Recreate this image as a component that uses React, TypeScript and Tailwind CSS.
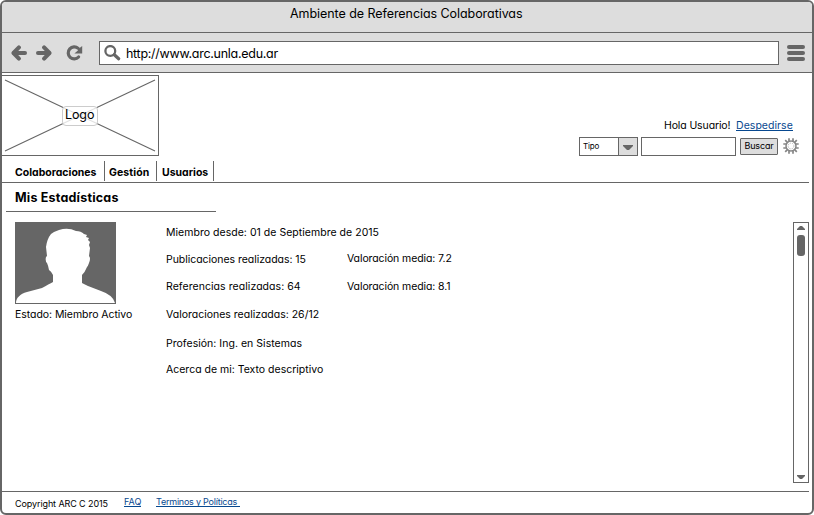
import React from "react";

const line = "#666666";

function BackArrow() {
  return (
    <svg width="16" height="16" viewBox="0 0 16 16" fill="none" stroke={line} strokeWidth="4" strokeLinecap="round" strokeLinejoin="round">
      <path d="M7.9 2.4 2.5 8l5.4 5.6" />
      <path d="M3 8h11" />
    </svg>
  );
}

function Reload() {
  return (
    <svg width="17" height="16" viewBox="0 0 17 16" fill="none">
      <path d="M12.2 3.4A6 6 0 1 0 12.6 12" stroke={line} strokeWidth="3.2" strokeLinecap="round" />
      <path d="M16.2 1v7.4H8.4l3.2-2.6 1.4-2.4z" fill={line} />
    </svg>
  );
}

function Search() {
  return (
    <svg width="17" height="16" viewBox="0 0 17 16" fill="none" stroke={line}>
      <circle cx="6.3" cy="6" r="4.9" strokeWidth="2.3" />
      <path d="m10.3 9.7 4.4 4" strokeWidth="3.2" strokeLinecap="round" />
    </svg>
  );
}

function Gear() {
  return (
    <svg width="16" height="16" viewBox="0 0 16 16" fill="none" stroke="#858585">
      <g strokeWidth="1.7">
        <path d="M6 0.3v3M10 0.3v3M6 12.7v3M10 12.7v3M0.3 6h3M0.3 10h3M12.7 6h3M12.7 10h3" />
        <path d="m2.2 2.2 2.2 2.2M13.8 2.2l-2.2 2.2M2.2 13.8l2.2-2.2M13.8 13.8l-2.2-2.2" />
      </g>
      <circle cx="8" cy="8" r="5" strokeWidth="1.5" />
      <circle cx="8" cy="8" r="2.9" strokeWidth="0.8" stroke="#aaaaaa" strokeDasharray="1.4 1" />
    </svg>
  );
}

function Avatar() {
  return (
    <svg width="101" height="82" viewBox="0 0 101 82">
      <rect width="101" height="82" fill={line} />
      <path
        fill="#fff"
        d="M1 81C1 76 5 72 12 70L27 66Q34 62 38 60V53Q36 49 34 48Q33 43 32 41Q30 39 31 35L32 34L31 25Q32 17 36 12L39 10L44 8Q53 5 61 9Q66 9 69 12L72 13L71 15L74 16L73 18L75 20L74 23L75 26L74 34Q76 36 74 41Q73 44 72 45Q70 50 67 53V61L73 64L86 69Q98 73 100 81Z"
      />
    </svg>
  );
}

function Triangle({ up = false }: { up?: boolean }) {
  return (
    <svg width="8" height="4" viewBox="0 0 8 4">
      <path d={up ? "M0 4V3L3 0h2l3 3v1z" : "M0 0h8v1L5 4H3L0 1z"} fill={line} />
    </svg>
  );
}

const link = "text-[#07488f] border-b border-[#07488f]";

export default function App() {
  return (
    <div className="flex h-[515px] w-[814px] flex-col overflow-hidden rounded-[6px] border-2 border-[#666666] bg-white font-['Inter','Liberation_Sans',sans-serif] text-[10.5px] leading-[18px] whitespace-nowrap text-black [font-feature-settings:'cv11']">
      <header className="shrink-0 bg-[#dddddd]">
        <div className="h-[31px] border-b border-[#666666] pt-[2px] pl-[288px] text-[12.5px] leading-5 tracking-[-0.06px]">
          Ambiente de Referencias Colaborativas
        </div>
        <div className="flex h-10 items-center border-b border-[#666666] pl-[9px]">
          <BackArrow />
          <span className="ml-[9px] rotate-180"><BackArrow /></span>
          <span className="ml-[14px]"><Reload /></span>
          <div className="ml-4 flex h-6 w-[680px] items-center border border-[#666666] bg-white pl-1">
            <Search />
            <span className="ml-[5px] pt-[2px] text-[12.5px] leading-5 tracking-[-0.28px]">http://www.arc.unla.edu.ar</span>
          </div>
          <div className="ml-2 flex flex-col gap-[2px] pt-px">
            <i className="h-1 w-[18px] rounded-[2px] bg-[#666666]" />
            <i className="h-1 w-[18px] rounded-[2px] bg-[#666666]" />
            <i className="h-1 w-[18px] rounded-[2px] bg-[#666666]" />
          </div>
        </div>
      </header>

      <div className="flex h-[85px] shrink-0 pt-[2px]">
        <div className="-ml-px grid h-[81px] w-[158px] place-items-center border border-[#666666]">
          <svg className="col-start-1 row-start-1" width="156" height="79" viewBox="0 0 156 79" stroke={line} strokeWidth="1.1">
            <path d="m3 4 150 71M3 75 153 4" />
          </svg>
          <span className="col-start-1 row-start-1 h-5 w-[36px] rounded-[4px] border border-[#cccccc] bg-white/80 pl-[2px] text-[12.5px] leading-[16px] tracking-[-0.1px]">Logo</span>
        </div>
        <div className="mr-[19px] ml-auto pt-[42px]">
          <div className="flex h-5 items-start justify-end">
            <span className="w-[72px] tracking-[-0.12px]">Hola Usuario!</span>
            <span className={`h-[14px] w-[57px] tracking-[0.05px] ${link}`}>Despedirse</span>
          </div>
          <div className="flex items-center">
            <div className="flex h-[19px] w-[59px] border border-[#666666] text-[8px] leading-[17px] tracking-[-0.2px]">
              <span className="w-[39px] border-r border-[#666666] pl-[3px]">Tipo</span>
              <span className="flex flex-1 items-center justify-center bg-[#dddddd] pt-[2px]">
                <svg width="10" height="5" viewBox="0 0 10 5"><path d="M0 0h10v1L6 5H4L0 1z" fill={line} /></svg>
              </span>
            </div>
            <div className="ml-[3px] h-[19px] w-[95px] border border-[#666666]" />
            <div className="ml-1 h-[17px] w-[38px] rounded-[1px] border border-[#666666] bg-[#dddddd] text-center text-[9px] leading-[14px] tracking-[-0.15px]">Buscar</div>
            <span className="-mt-px -mr-[6px] mb-px ml-[5px]"><Gear /></span>
          </div>
        </div>
      </div>

      <nav className="mr-[3px] flex h-[25px] shrink-0 border-b border-[#666666] pt-[3px] pl-[13px] font-bold">
        <span className="h-5 w-[90px] border-r border-[#666666] pt-[3px]">Colaboraciones</span>
        <span className="h-5 w-[52px] border-r border-[#666666] pt-[3px] pl-[4px] tracking-[0.1px]">Gestión</span>
        <span className="h-5 w-[57px] border-r border-[#666666] pt-[3px] pl-[5px]">Usuarios</span>
      </nav>
      <h1 className="ml-1 h-[29px] w-[210px] shrink-0 border-b border-[#666666] pt-[5px] pl-[9px] text-[12.5px] leading-5 font-bold tracking-[0.2px]">
        Mis Estadísticas
      </h1>

      <main className="flex h-[279px] shrink-0 pt-[10px] pr-[3px] pl-[13px]">
        <div className="w-[151px]">
          <Avatar />
          <p className="pt-[2px] tracking-[-0.05px]">Estado: Miembro Activo</p>
        </div>
        <div className="w-[181px] pt-[2px]">
          <p className="h-[27px] tracking-[0.03px]">Miembro desde: 01 de Septiembre de 2015</p>
          <p className="h-[27px] tracking-[-0.04px]">Publicaciones realizadas: 15</p>
          <p className="h-[28px] tracking-[0.06px]">Referencias realizadas: 64</p>
          <p className="h-[29px]">Valoraciones realizadas: 26/12</p>
          <p className="h-[26px] tracking-[0.03px]">Profesión: Ing. en Sistemas</p>
          <p>Acerca de mi: Texto descriptivo</p>
        </div>
        <div className="pt-[28px] tracking-[-0.1px]">
          <p className="h-[28px]">Valoración media: 7.2</p>
          <p>Valoración media: 8.1</p>
        </div>
        <div className="ml-auto flex h-[261px] w-4 flex-col items-center border border-[#666666] py-[3px]">
          <Triangle up />
          <div className="mt-[5px] h-[21px] w-2 rounded-[3px] bg-[#666666]" />
          <span className="mt-auto flex"><Triangle /></span>
        </div>
      </main>

      <footer className="mr-[3px] flex h-[22px] shrink-0 items-start border-t border-[#666666] pl-[13px] text-[9px] leading-3">
        <span className="w-[109px] pt-[6px] tracking-[-0.1px]">Copyright ARC C 2015</span>
        <span className="w-[32px] pt-[4px]"><span className={`block h-[11px] w-[17px] ${link}`}>FAQ</span></span>
        <span className="pt-[4px]"><span className={`block h-[11px] w-[84px] tracking-[-0.22px] ${link}`}>Terminos y Políticas</span></span>
      </footer>
    </div>
  );
}
